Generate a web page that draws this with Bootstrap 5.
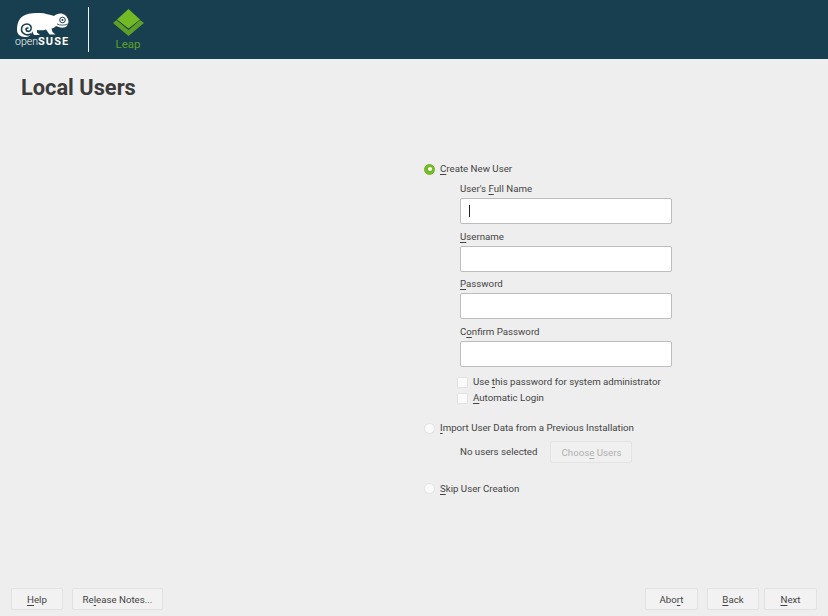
<!DOCTYPE html>
<html lang="en">
<head>
<meta charset="utf-8">
<title>Local Users</title>
<link rel="stylesheet" href="https://cdn.jsdelivr.net/npm/bootstrap@5.3.0/dist/css/bootstrap.min.css">
<style>
html,body{height:100%;}
body{background:#eeeeee;color:#444;font-family:Roboto,"Liberation Sans",sans-serif;font-size:9.7px;line-height:14px;overflow:hidden;}
.app-shell{height:616px;}
.top-band{height:59px;background:#173f4f;}
.logo-svg{display:block;}
.logo-name{font-family:Roboto,"Liberation Sans",sans-serif;font-size:10px;fill:#fff;}
.logo-name-b{font-weight:700;font-size:11px;letter-spacing:1.1px;}
.logo-open{font-weight:300;font-size:10.5px;}
.logo-leap{font-size:11.5px;fill:#5f9f26;}
.page-title{font-size:21.8px;font-weight:700;line-height:28px;margin:15px 0 0 21px;color:#3b3b3b;}
.form-area{padding:61px 0 0 424px;}
.choice{height:12px;display:flex;align-items:center;gap:5px;}
.dot{width:11px;height:11px;border-radius:50%;background:#fafafa;border:1px solid #e2e2e2;flex:none;}
.dot-on{background:#73ba25;border-color:#73ba25;display:flex;align-items:center;justify-content:center;}
.dot-on::after{content:"";width:4px;height:4px;border-radius:50%;background:#fff;}
.sub-block{padding-left:36px;width:248px;}
.fld-label{display:block;height:14px;line-height:14px;margin:0 0 2px;}
.fld{display:block;width:212px;height:26px;background:#fff;border:1px solid #bdbdbd;border-radius:2px;position:relative;margin-bottom:5.5px;}
.caret-bar{position:absolute;left:8px;top:6px;width:1px;height:12px;background:#222;}
.chk-row{height:16px;display:flex;align-items:center;gap:5px;margin-left:-3px;white-space:nowrap;}
.box{width:11px;height:11px;background:#fafafa;border:1px solid #e2e2e2;border-radius:1px;flex:none;}
.ghost-btn{width:82px;height:22px;background:#f0f0f0;border:1px solid #e3e3e3;border-radius:2px;color:#b0b0b0;font-size:9.7px;padding:1px 0 0;line-height:20px;}
.foot-btn{height:22px;background:#f2f2f2;border:1px solid #e2e2e2;border-radius:2px;color:#444;font-size:9.7px;padding:1px 0 0;line-height:20px;}
.w-help{width:52px}.w-notes{width:91px}.w-abort{width:53px}.w-back{width:52px}.w-next{width:53px}
.foot-bar{padding:0 11px 6px;}
.gap-left{gap:9px;}
.gap-abort{margin-right:9px;}
.gap-tiny{gap:5px;}
u{text-underline-offset:2px;text-decoration-thickness:1px;}
.r-import{margin-top:16px;}
.r-skip{margin-top:19.5px;}
.users-row{margin-top:7px;gap:13px;}
.create-fields{margin-top:7px;}
.chk-wrap{padding-top:2px;}
</style>
</head>
<body>
<div class="app-shell d-flex flex-column">
  <header class="top-band d-flex align-items-center flex-shrink-0">
    <svg class="logo-svg" width="160" height="59" viewBox="0 0 160 59" role="img" aria-label="openSUSE Leap">
      <path fill="#fff" d="M17 30C17 22 20 17 25 15C30 13 35 13 40 13C45 13 50 15 54 16C56 14 60 13 63 14C66 15 68 18 68.500 21C68.500 24 67 27 64 27.500C61 28 58 27 56 26C55 27.500 53 28.500 51.500 28.500L52.500 32L55.500 34.500L49.500 34.500L46 29.500C43 30.500 40 30.500 37 30L37 32.500L40 35L34 35L32 31C32 35 29 37 25 37C20 37 17 34 17 30Z"/>
      <path fill="none" stroke="#173f4f" stroke-width="1.600" stroke-linecap="round" d="M31 34C27 36 22 34 21.500 30C21 26 24 24 27 24C30 24 32 27 31 29.500C30 32 26.500 32 26 29.500C26 28.500 27 28 28 28"/>
      <circle cx="62.500" cy="20" r="2.800" fill="none" stroke="#173f4f" stroke-width="1"/>
      <circle cx="62.500" cy="20" r="1" fill="#173f4f"/>
      <path fill="none" stroke="#173f4f" stroke-width=".8" d="M57 24C60 25.500 64 25.500 68 24"/>
      <text class="logo-name" x="15" y="45"><tspan class="logo-open">open</tspan><tspan class="logo-name-b">SUSE</tspan></text>
      <rect x="88" y="7" width="1" height="45" fill="#f2f2f2"/>
      <path fill="#73ba25" d="M128.500 9L140 19.500L128.500 28.500L117 19.500Z"/>
      <path fill="#5f9f26" d="M113 23L116.500 20L128.500 30L140 20L144 23L128.500 36Z"/>
      <text class="logo-name logo-leap" x="115.500" y="48">Leap</text>
    </svg>
  </header>

  <h1 class="page-title flex-shrink-0">Local Users</h1>

  <main class="form-area flex-grow-1">
    <div class="choice"><span class="dot dot-on"></span><span><u>C</u>reate New User</span></div>
    <div class="sub-block create-fields">
      <label class="fld-label">User's <u>F</u>ull Name</label>
      <div class="fld"><span class="caret-bar"></span></div>
      <label class="fld-label"><u>U</u>sername</label>
      <div class="fld"></div>
      <label class="fld-label"><u>P</u>assword</label>
      <div class="fld"></div>
      <label class="fld-label">C<u>o</u>nfirm Password</label>
      <div class="fld"></div>
      <div class="chk-wrap">
        <div class="chk-row"><span class="box"></span><span>Use <u>t</u>his password for system administrator</span></div>
        <div class="chk-row"><span class="box"></span><span><u>A</u>utomatic Login</span></div>
      </div>
    </div>
    <div class="choice r-import"><span class="dot"></span><span><u>I</u>mport User Data from a Previous Installation</span></div>
    <div class="sub-block d-flex align-items-center users-row">
      <span>No users selected</span>
      <button type="button" class="ghost-btn" disabled>Choos<u>e</u> Users</button>
    </div>
    <div class="choice r-skip"><span class="dot"></span><span><u>S</u>kip User Creation</span></div>
  </main>

  <footer class="foot-bar d-flex justify-content-between flex-shrink-0">
    <div class="d-flex gap-left">
      <button type="button" class="foot-btn w-help"><u>H</u>elp</button>
      <button type="button" class="foot-btn w-notes">Re<u>l</u>ease Notes...</button>
    </div>
    <div class="d-flex">
      <button type="button" class="foot-btn w-abort gap-abort">Abo<u>r</u>t</button>
      <div class="d-flex gap-tiny">
        <button type="button" class="foot-btn w-back"><u>B</u>ack</button>
        <button type="button" class="foot-btn w-next"><u>N</u>ext</button>
      </div>
    </div>
  </footer>
</div>
<script src="https://cdn.jsdelivr.net/npm/bootstrap@5.3.0/dist/js/bootstrap.bundle.min.js"></script>
</body>
</html>
